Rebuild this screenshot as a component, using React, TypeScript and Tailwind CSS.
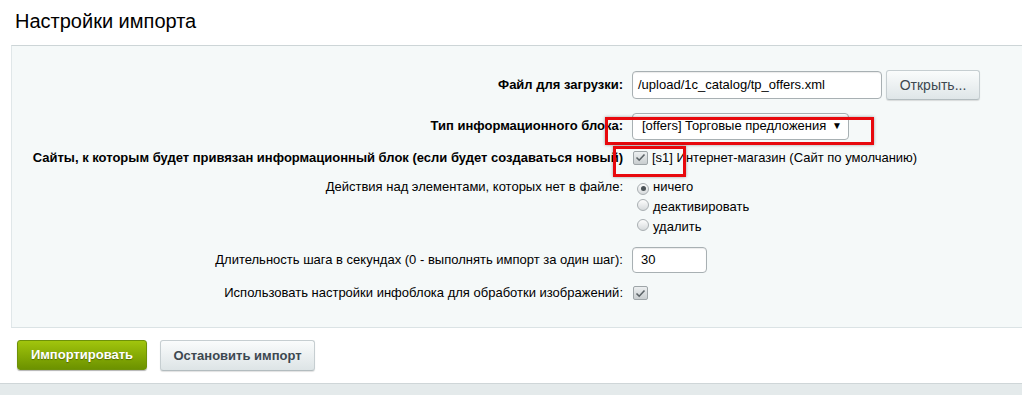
import React from "react";

function Checkbox() {
  return (
    <span className="inline-flex h-[14px] w-[15px] shrink-0 items-center justify-center rounded-[2px] border border-[#9ea5a8] bg-linear-to-b from-[#eceff0] to-[#c9ced0]">
      <svg width="11" height="9" viewBox="0 0 11 9">
        <path d="M1.5 4.5 L4.2 7.2 L9.5 1.5" fill="none" stroke="#5b6367" strokeWidth="1.6" />
      </svg>
    </span>
  );
}

function Radio({ checked }: { checked?: boolean }) {
  return (
    <span className="inline-flex h-[12px] w-[12px] shrink-0 items-center justify-center rounded-full border border-[#a9afb2] bg-linear-to-b from-[#fdfdfd] to-[#d6dadc]">
      {checked && <span className="h-[5px] w-[5px] rounded-full bg-[#4b5357]" />}
    </span>
  );
}

function Row({
  label,
  bold,
  children,
  className = "",
}: {
  label: string;
  bold?: boolean;
  children: React.ReactNode;
  className?: string;
}) {
  return (
    <div className={`flex ${className}`}>
      <div
        className={`w-[612px] shrink-0 pr-[1px] text-right ${bold ? "font-bold" : ""}`}
      >
        {label}
      </div>
      <div className="relative ml-[8px] flex-1">{children}</div>
    </div>
  );
}

export default function App() {
  return (
    <div className="w-[1022px] h-[395px] overflow-hidden bg-white font-['Liberation_Sans',Arial,sans-serif] text-[13px] leading-[18px] text-black">
      <div className="h-[45px] px-[15px] pt-[8px] text-[20px] leading-[26px]">Настройки импорта</div>

      <div className="ml-[11px] border-t border-l border-b border-t-[#cdd5d7] border-l-[#e0e7e9] border-b-[#dbe3e5] bg-[#f5f9f9] pt-[24px] pb-[25px]">
        <Row label="Файл для загрузки:" bold className="h-[30px] items-center">
          <div className="flex items-center">
            <div className="flex h-[28px] w-[250px] items-center rounded-[4px] border border-[#a8b0b3] bg-white pl-[5px] shadow-[inset_0_1px_1px_rgba(0,0,0,0.08)]">
              /upload/1c_catalog/tp_offers.xml
            </div>
            <button className="ml-[4px] h-[30px] w-[94px] rounded-[3px] border border-[#c6ced1] border-b-[#b3bcbf] bg-linear-to-b from-[#fafcfc] to-[#dfe6e8] text-[14px] text-[#3d4850] shadow-[0_1px_1px_rgba(0,0,0,0.12)]">
              Открыть...
            </button>
          </div>
        </Row>

        <Row label="Тип информационного блока:" bold className="mt-[11px] h-[30px] items-center">
          <div className="relative flex h-[27px] w-[217px] items-center rounded-[4px] border border-[#a8b0b3] bg-white pl-[9px] pr-[6px]">
            <span className="flex-1">[offers] Торговые предложения</span>
            <span className="text-[10px] leading-none">▼</span>
          </div>
          <div className="pointer-events-none absolute left-[-27px] top-[4px] h-[28px] w-[269px] border-[3px] border-[#e8090d] shadow-[0_0_3px_rgba(0,0,0,0.35)]" />
        </Row>

        <Row
          label="Сайты, к которым будет привязан информационный блок (если будет создаваться новый)"
          bold
          className="mt-[8px] h-[18px] items-center"
        >
          <div className="flex items-center">
            <span className="ml-[1px]">
              <Checkbox />
            </span>
            <span className="ml-[4px]">[s1] Интернет-магазин (Сайт по умолчанию)</span>
          </div>
          <div className="pointer-events-none absolute left-[-19px] top-[-3px] h-[31px] w-[73px] border-[3px] border-[#e8090d] shadow-[0_0_3px_rgba(0,0,0,0.35)]" />
        </Row>

        <Row label="Действия над элементами, которых нет в файле:" className="mt-[10px] items-start leading-[20px]">
          <div className="flex flex-col">
            {[
              ["ничего", true],
              ["деактивировать", false],
              ["удалить", false],
            ].map(([t, c]) => (
              <div key={t as string} className="flex h-[20px] items-center">
                <span className="ml-[5px]">
                  <Radio checked={c as boolean} />
                </span>
                <span className="ml-[4px]">{t as string}</span>
              </div>
            ))}
          </div>
        </Row>

        <Row
          label="Длительность шага в секундах (0 - выполнять импорт за один шаг):"
          className="mt-[10px] h-[26px] items-center"
        >
          <div className="flex h-[26px] w-[75px] items-center rounded-[4px] border border-[#a8b0b3] bg-white pl-[8px] shadow-[inset_0_1px_1px_rgba(0,0,0,0.08)]">
            30
          </div>
        </Row>

        <Row
          label="Использовать настройки инфоблока для обработки изображений:"
          className="mt-[11px] h-[18px] items-center"
        >
          <span className="ml-[1px] flex">
            <Checkbox />
          </span>
        </Row>
      </div>

      <div className="flex h-[55px] items-start gap-[13px] pl-[17px] pt-[12px]">
        <button className="h-[30px] w-[130px] rounded-[3px] border border-[#6e9209] bg-linear-to-b from-[#a1c50d] to-[#6c9200] font-bold text-white shadow-[0_1px_1px_rgba(0,0,0,0.3)] [text-shadow:0_1px_1px_rgba(0,0,0,0.35)]">
          Импортировать
        </button>
        <button className="h-[31px] w-[155px] rounded-[3px] border border-[#c6ced1] border-b-[#b3bcbf] bg-linear-to-b from-[#fafcfc] to-[#dde4e6] font-bold text-[#3d4850] shadow-[0_1px_1px_rgba(0,0,0,0.12)]">
          Остановить импорт
        </button>
      </div>

      <div className="h-[20px] border-t border-[#cfd6d8] bg-[#e4eaeb]" />
    </div>
  );
}
